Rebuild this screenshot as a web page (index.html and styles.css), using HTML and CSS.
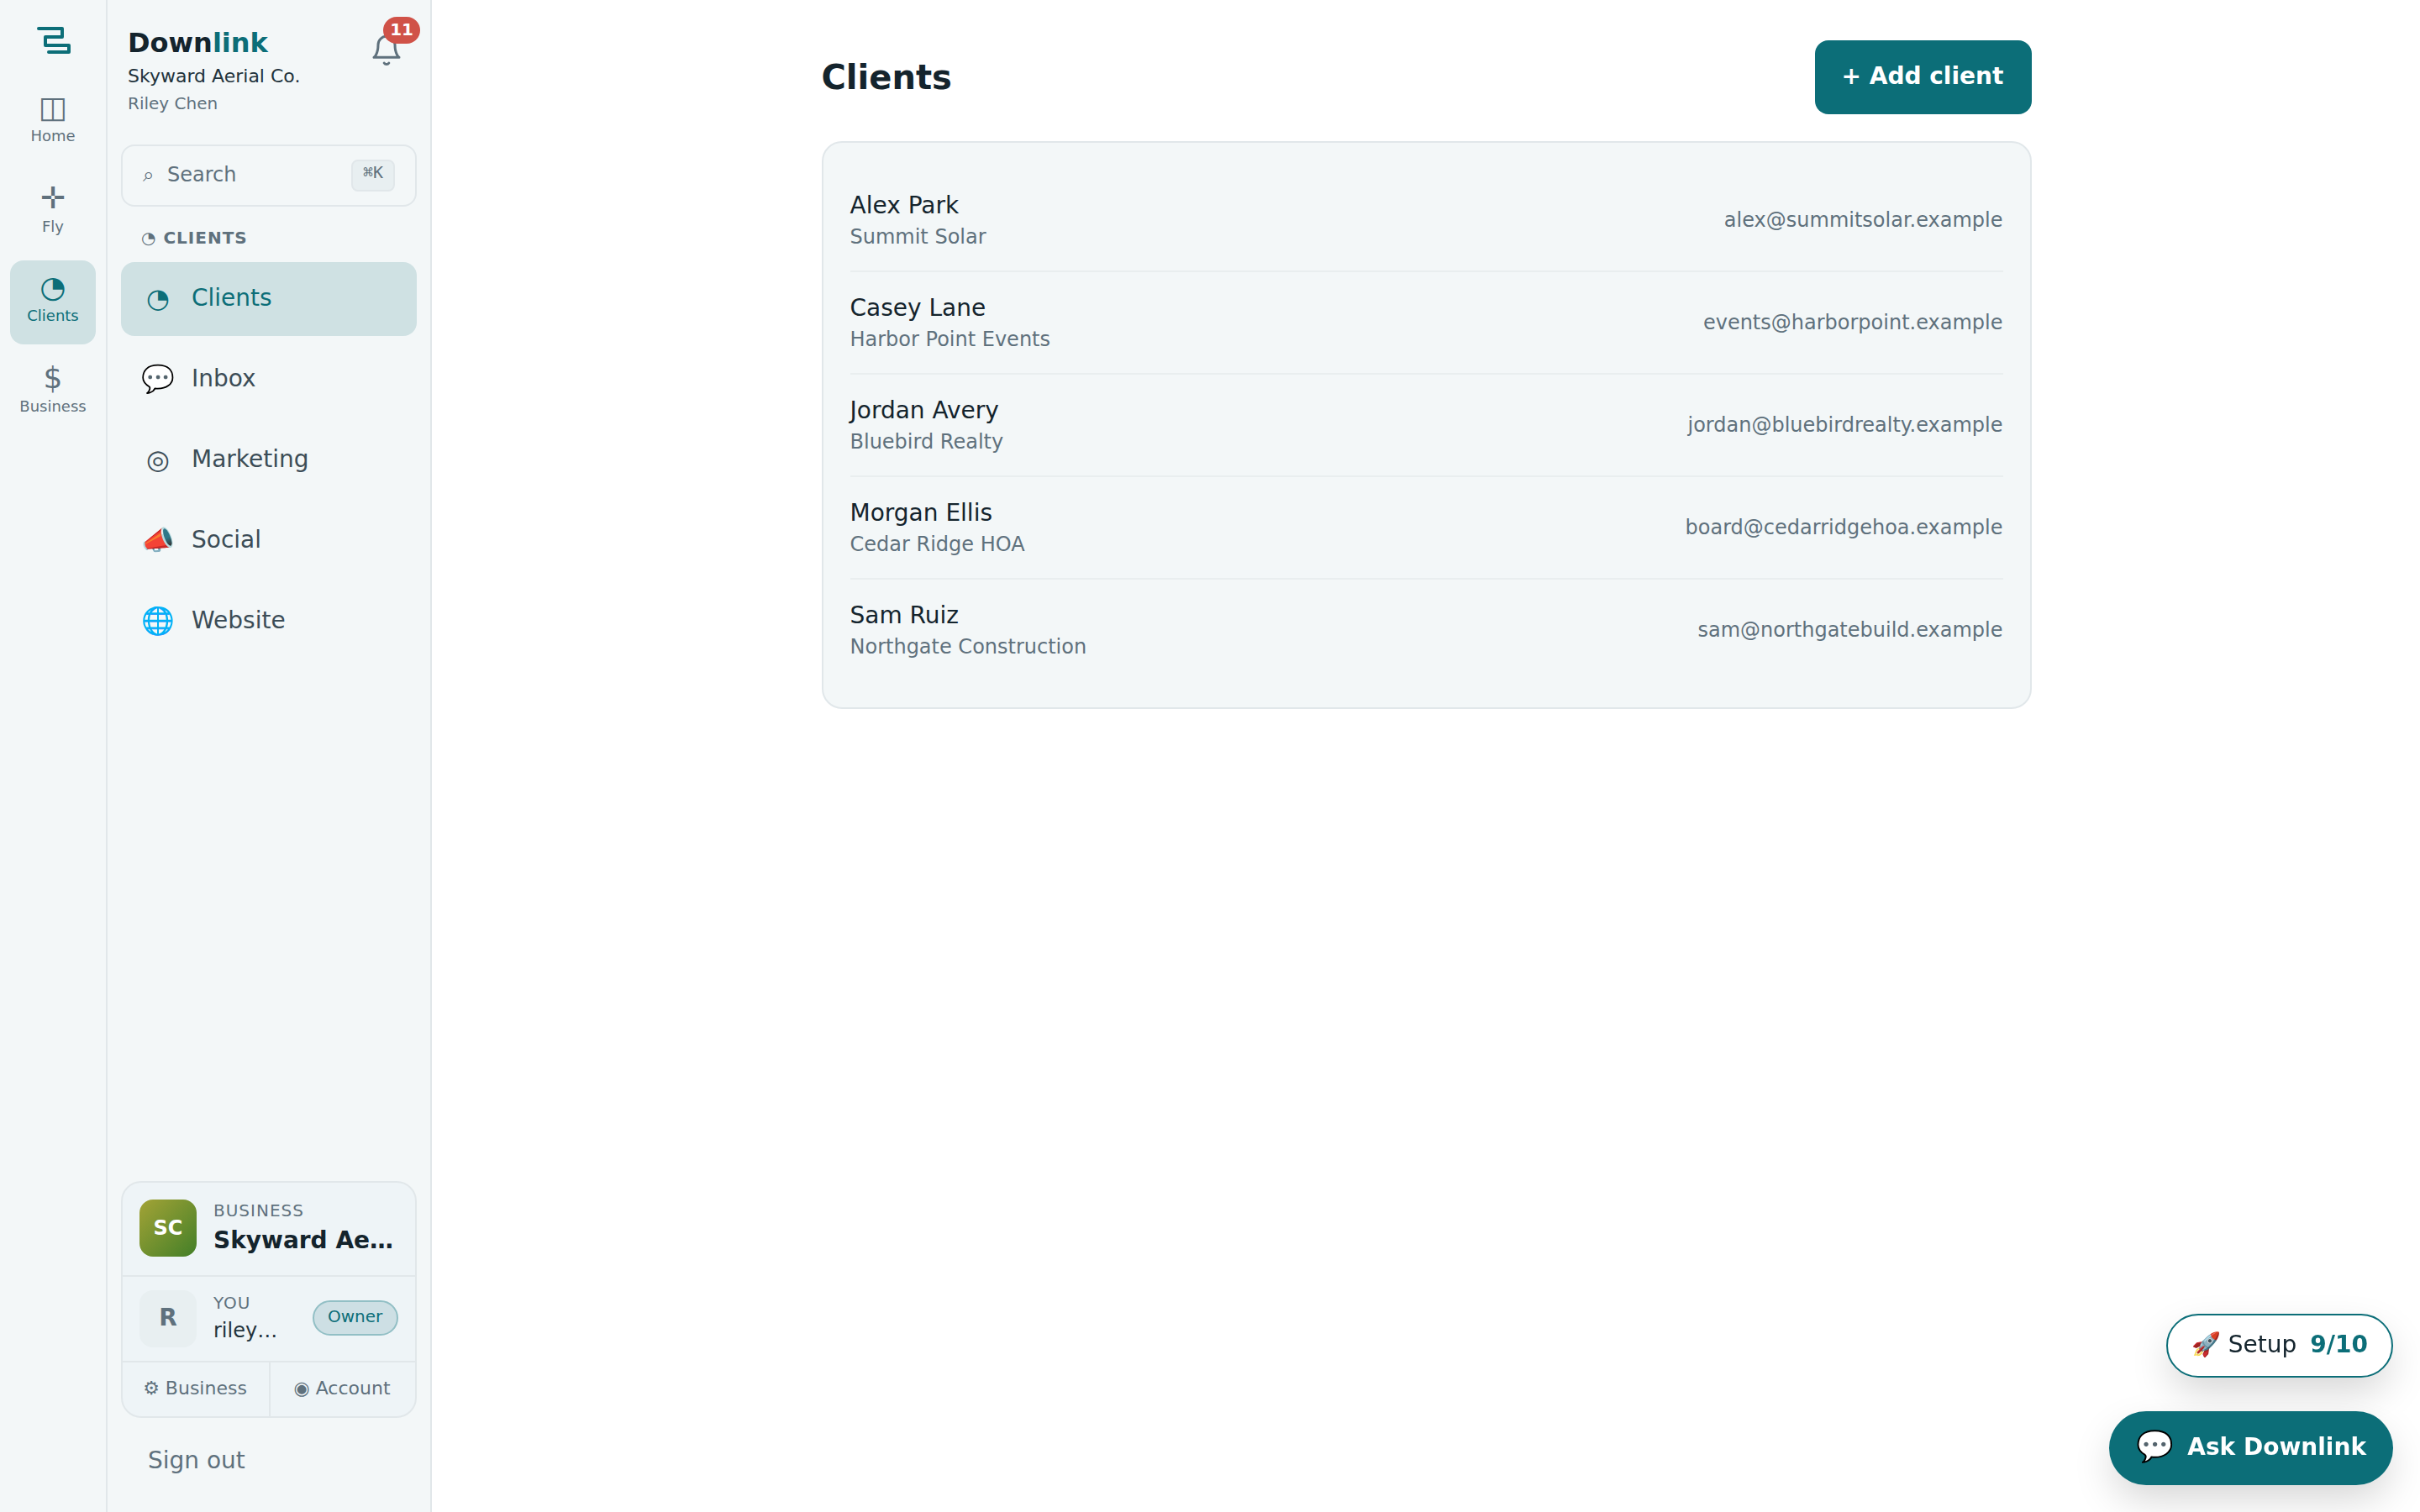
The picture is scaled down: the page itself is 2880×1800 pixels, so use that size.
FILE: index.html
```
<!DOCTYPE html>
<html lang="en">
  <head>
    <meta charset="UTF-8" />
    <meta name="viewport" content="width=device-width, initial-scale=1.0" />
    <title>Clients - Downlink</title>
    <link rel="stylesheet" href="styles.css">
  </head>
  <body>
    <div class="app">
      <nav class="rail">
        <svg class="logo" viewBox="0 0 44 36" fill="none">
          <path d="M4 4H32V14H12V24H40V32H16" stroke="currentColor" stroke-width="4" stroke-linecap="round" stroke-linejoin="round" />
        </svg>
        <a class="rail-item"><span class="rail-icon">◫</span><span class="rail-label">Home</span></a>
        <a class="rail-item short"><span class="rail-icon">✛</span><span class="rail-label">Fly</span></a>
        <a class="rail-item active"><span class="rail-icon">◔</span><span class="rail-label">Clients</span></a>
        <a class="rail-item"><span class="rail-icon">$</span><span class="rail-label">Business</span></a>
      </nav>

      <aside class="sidebar">
        <header class="side-head">
          <div>
            <div class="brand">Down<span>link</span></div>
            <div class="company">Skyward Aerial Co.</div>
            <div class="person">Riley Chen</div>
          </div>
          <div class="bell">
            <svg viewBox="0 0 24 24" width="40" height="40" fill="none" stroke="currentColor" stroke-width="1.8" stroke-linecap="round" stroke-linejoin="round">
              <path d="M18 8a6 6 0 0 0-12 0c0 7-3 9-3 9h18s-3-2-3-9" />
              <path d="M13.7 21a2 2 0 0 1-3.4 0" />
            </svg>
            <span class="badge">11</span>
          </div>
        </header>

        <div class="search">
          <span class="search-icon">⌕</span>
          <span class="search-text">Search</span>
          <kbd>⌘K</kbd>
        </div>

        <div class="section">◔ CLIENTS</div>
        <div class="menu">
          <a class="menu-item active"><span class="menu-icon">◔</span><span>Clients</span></a>
          <a class="menu-item"><span class="menu-icon">💬</span><span>Inbox</span></a>
          <a class="menu-item"><span class="menu-icon">◎</span><span>Marketing</span></a>
          <a class="menu-item"><span class="menu-icon">📣</span><span>Social</span></a>
          <a class="menu-item"><span class="menu-icon">🌐</span><span>Website</span></a>
        </div>

        <div class="account">
          <div class="account-row business">
            <div class="avatar">SC</div>
            <div class="info">
              <div class="caption">BUSINESS</div>
              <div class="business-name">Skyward Aerial Co.</div>
            </div>
          </div>
          <div class="account-row you">
            <div class="avatar plain">R</div>
            <div class="info">
              <div class="caption">YOU</div>
              <div class="email">riley@skyward.example</div>
            </div>
            <span class="role">Owner</span>
          </div>
          <div class="account-links">
            <a>⚙ Business</a>
            <a>◉ Account</a>
          </div>
        </div>
        <a class="signout">Sign out</a>
      </aside>

      <main class="main">
        <div class="page-head">
          <h1>Clients</h1>
          <button class="add">+ Add client</button>
        </div>
        <div class="card">
          <div class="client">
            <div>
              <div class="client-name">Alex Park</div>
              <div class="client-org">Summit Solar</div>
            </div>
            <div class="client-mail">alex@summitsolar.example</div>
          </div>
          <div class="client">
            <div>
              <div class="client-name">Casey Lane</div>
              <div class="client-org">Harbor Point Events</div>
            </div>
            <div class="client-mail">events@harborpoint.example</div>
          </div>
          <div class="client">
            <div>
              <div class="client-name">Jordan Avery</div>
              <div class="client-org">Bluebird Realty</div>
            </div>
            <div class="client-mail">jordan@bluebirdrealty.example</div>
          </div>
          <div class="client">
            <div>
              <div class="client-name">Morgan Ellis</div>
              <div class="client-org">Cedar Ridge HOA</div>
            </div>
            <div class="client-mail">board@cedarridgehoa.example</div>
          </div>
          <div class="client">
            <div>
              <div class="client-name">Sam Ruiz</div>
              <div class="client-org">Northgate Construction</div>
            </div>
            <div class="client-mail">sam@northgatebuild.example</div>
          </div>
        </div>
      </main>
    </div>

    <div class="floating">
      <button class="setup"><span>🚀 Setup</span><b>9/10</b></button>
      <button class="ask"><span class="ask-icon">💬</span><span>Ask Downlink</span></button>
    </div>
  </body>
</html>
```

FILE: styles.css
```
:root {
  --teal: #0c6e78;
  --ink: #14242d;
  --ink-soft: #22333c;
  --body: #3c4d57;
  --muted: #5f717d;
  --panel: #f3f7f8;
  --line: #e1e7ea;
  --tint: #cfe1e3;
}
* {
  box-sizing: border-box;
}
body {
  margin: 0;
  background: #fff;
  color: var(--ink);
  font-family: "DejaVu Sans", sans-serif;
  font-size: 28px;
  line-height: 35px;
}
button {
  font: inherit;
  border: none;
  margin: 0;
}
.app {
  display: flex;
  height: 100vh;
}

/* icon rail */
.rail {
  width: 128px;
  flex: none;
  padding: 30px 12px 0;
  background: var(--panel);
  border-right: 2px solid var(--line);
  display: flex;
  flex-direction: column;
  gap: 8px;
}
.logo {
  width: 44px;
  height: 36px;
  margin: 0 0 22px 30px;
  color: var(--teal);
}
.rail-item {
  height: 100px;
  padding-top: 11px;
  border-radius: 16px;
  display: flex;
  flex-direction: column;
  align-items: center;
  gap: 2px;
  color: var(--muted);
}
.rail-item.short {
  height: 98px;
}
.rail-item.active {
  background: var(--tint);
  color: var(--teal);
}
.rail-icon {
  font-size: 36px;
  line-height: 41px;
}
.rail-label {
  font-size: 18px;
  line-height: 23px;
}

/* sidebar */
.sidebar {
  width: 386px;
  flex: none;
  padding: 31px 16px 44px;
  background: var(--panel);
  border-right: 2px solid var(--line);
  display: flex;
  flex-direction: column;
}
.side-head {
  display: flex;
  justify-content: space-between;
  height: 141px;
  padding: 0 16px 0 8px;
}
.brand {
  font-size: 32px;
  line-height: 40px;
  font-weight: bold;
}
.brand span {
  color: var(--teal);
}
.company {
  margin-top: 5px;
  font-size: 22px;
  line-height: 29px;
  color: var(--ink-soft);
}
.person {
  margin-top: 4px;
  font-size: 20px;
  line-height: 28px;
  color: var(--muted);
}
.bell {
  position: relative;
  height: 40px;
  margin-top: 9px;
  color: var(--muted);
}
.bell svg {
  display: block;
}
.badge {
  position: absolute;
  top: -20px;
  right: -20px;
  height: 32px;
  padding: 1px 8px 0;
  border-radius: 16px;
  background: #d05248;
  color: #fff;
  font-size: 20px;
  line-height: 28px;
  font-weight: bold;
}
.search {
  height: 74px;
  padding: 0 24px;
  border: 2px solid var(--line);
  border-radius: 16px;
  display: flex;
  align-items: flex-start;
  color: var(--muted);
  font-size: 24px;
  line-height: 30px;
}
.search-icon {
  width: 29px;
  padding-top: 19px;
}
.search-text {
  flex: 1;
  padding-top: 19px;
}
kbd {
  height: 38px;
  margin-top: 16px;
  padding: 1px 12px 0;
  border: 2px solid var(--line);
  border-radius: 8px;
  background: #e8eff1;
  font-family: "DejaVu Sans Mono", monospace;
  font-size: 20px;
  line-height: 24px;
}
.section {
  margin: 23px 0 15px;
  padding-left: 24px;
  font-size: 20px;
  line-height: 28px;
  font-weight: bold;
  letter-spacing: 0.05em;
  color: var(--muted);
}
.menu {
  display: flex;
  flex-direction: column;
  gap: 8px;
}
.menu-item {
  height: 88px;
  padding: 24px 24px 0;
  border-radius: 16px;
  display: flex;
  align-items: flex-start;
  gap: 20px;
  line-height: 37px;
  color: var(--body);
}
.menu-item.active {
  background: var(--tint);
  color: var(--teal);
}
.menu-icon {
  width: 40px;
  font-size: 32px;
  line-height: 38px;
  text-align: center;
}

/* account box */
.account {
  margin-top: auto;
  border: 2px solid var(--line);
  border-radius: 24px;
  background: #eef4f7;
}
.account-row {
  display: flex;
  align-items: flex-start;
  gap: 20px;
  padding: 0 20px;
  border-bottom: 2px solid var(--line);
}
.business {
  height: 112px;
  padding-top: 20px;
}
.you {
  height: 102px;
  padding-top: 16px;
}
.avatar {
  width: 68px;
  height: 68px;
  flex: none;
  border-radius: 16px;
  background: linear-gradient(135deg, #a3a336, #437f28);
  color: #fff;
  font-size: 24px;
  line-height: 68px;
  font-weight: bold;
  text-align: center;
}
.avatar.plain {
  background: #e8eff1;
  color: var(--muted);
  font-size: 28px;
  line-height: 65px;
}
.info {
  flex: 1;
  min-width: 0;
}
.business .info {
  margin-top: -1px;
}
.you .info {
  margin-top: 1px;
}
.caption {
  margin-bottom: 4px;
  font-size: 20px;
  line-height: 28px;
  letter-spacing: 0.05em;
  color: var(--muted);
}
.business-name,
.email {
  overflow: hidden;
  white-space: nowrap;
  text-overflow: ellipsis;
}
.business-name {
  font-weight: bold;
}
.email {
  font-size: 24px;
  line-height: 30px;
  color: var(--ink-soft);
}
.role {
  width: 102px;
  height: 42px;
  margin-top: 12px;
  padding: 3px 0 0 16px;
  border: 2px solid #92bfc5;
  border-radius: 21px;
  background: #cddfe4;
  color: var(--teal);
  font-size: 20px;
  line-height: 28px;
}
.account-links {
  display: flex;
}
.account-links a {
  width: 50%;
  height: 64px;
  padding: 16px 2px 0 0;
  font-size: 22px;
  line-height: 29px;
  text-align: center;
  color: var(--muted);
}
.account-links a:last-child {
  border-left: 2px solid var(--line);
}
.signout {
  margin-top: 33px;
  padding-left: 32px;
  color: var(--muted);
}

/* client list */
.main {
  width: 1440px;
  margin-left: 463.5px;
  padding-top: 48px;
}
.page-head {
  height: 88px;
  margin-bottom: 32px;
  display: flex;
  justify-content: space-between;
  align-items: flex-start;
}
h1 {
  margin: 21px 0 0;
  font-size: 40px;
  line-height: 46px;
}
.add {
  width: 258px;
  height: 88px;
  padding: 25px 0 28px 32px;
  border-radius: 16px;
  background: var(--teal);
  color: #fff;
  font-weight: bold;
  text-align: left;
}
.card {
  padding: 32px;
  border: 2px solid var(--line);
  border-radius: 24px;
  background: var(--panel);
}
.client {
  height: 122px;
  padding-top: 25px;
  display: flex;
  justify-content: space-between;
  border-bottom: 2px solid #e9eeef;
}
.client:last-child {
  height: 120px;
  border-bottom: none;
}
.client-org,
.client-mail {
  font-size: 24px;
  line-height: 30px;
  color: var(--muted);
}
.client-org {
  margin-top: 5px;
}
.client-mail {
  margin-top: 20px;
}

/* floating buttons, above the page */
.floating {
  position: fixed;
  right: 32px;
  bottom: 32px;
  display: flex;
  flex-direction: column;
  align-items: flex-end;
  gap: 40px;
}
.setup,
.ask {
  display: flex;
  align-items: flex-start;
  gap: 16px;
  border-radius: 44px;
  box-shadow: 0 20px 48px -4px rgba(0, 0, 0, 0.17);
}
.setup {
  height: 76px;
  padding: 17px 28px 20px;
  border: 2px solid var(--teal);
  background: #fff;
  color: var(--ink);
}
.setup b {
  color: var(--teal);
}
.ask {
  height: 88px;
  padding: 25px 32px 28px;
  background: var(--teal);
  color: #fff;
  font-weight: bold;
}
.ask-icon {
  margin-top: -4px;
  font-size: 36px;
  line-height: 41px;
  font-weight: normal;
}
```
